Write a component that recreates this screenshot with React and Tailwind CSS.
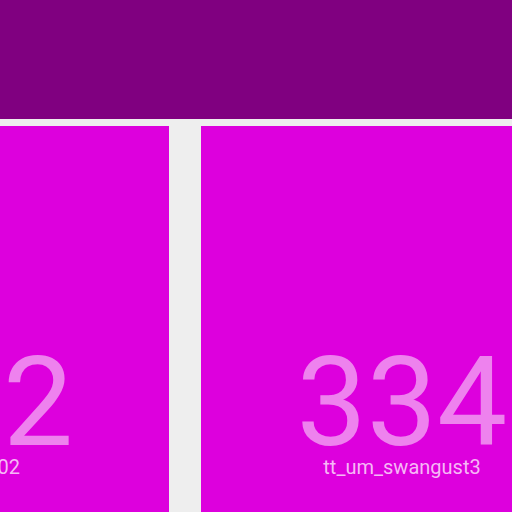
export default function App() {
  const cards = [
    { n: "332", label: "tt_um_aa02" },
    { n: "334", label: "tt_um_swangust3" },
  ];
  return (
    <div className="w-[512px] h-[512px] overflow-hidden bg-[#eeeeee]" style={{ fontFamily: "Roboto, 'Liberation Sans', sans-serif" }}>
      <div className="h-[119px] bg-[#800080]" />
      <div className="flex gap-[32px] ml-[-233px] mt-[7px]">
        {cards.map((c) => (
          <div key={c.n} className="w-[402px] h-[420px] shrink-0 bg-[#dd00dd] flex flex-col items-center pt-[222px]">
            <div className="text-[125px] leading-[109px] text-[#ee82ee]">{c.n}</div>
            <div className="text-[20px] leading-none text-[#f6b8f6]">{c.label}</div>
          </div>
        ))}
      </div>
    </div>
  );
}
